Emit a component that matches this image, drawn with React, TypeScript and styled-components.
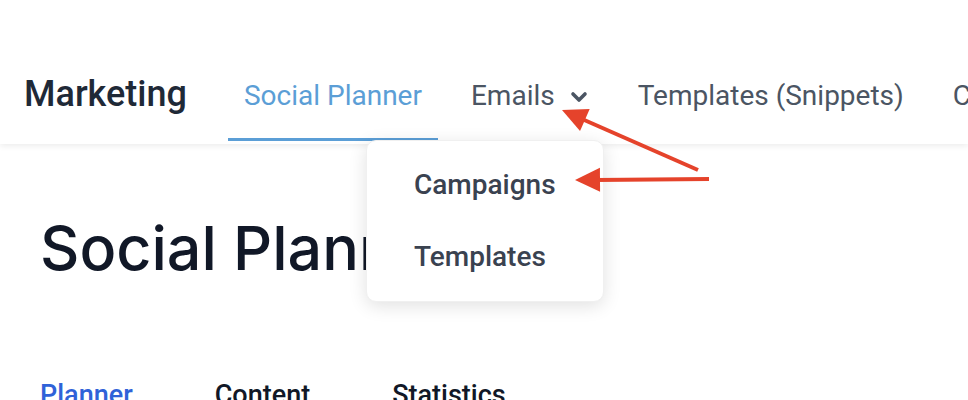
import styled, { createGlobalStyle } from 'styled-components';

const GlobalStyle = createGlobalStyle`
    html, body {
        margin: 0;
        padding: 0;
        background: #ffffff;
        overflow: hidden;
    }
    * {
        box-sizing: border-box;
    }
`

export const Page = styled.div`
    position: relative;
    width: 968px;
    height: 400px;
    overflow: hidden;
    font-family: Roboto, "Liberation Sans", sans-serif;
`

export const Header = styled.header`
    position: relative;
    z-index: 1;
    display: flex;
    align-items: flex-end;
    height: 144px;
    padding-left: 24px;
    background: #ffffff;
    box-shadow: 0 2px 6px rgba(0, 0, 0, 0.08);
    white-space: nowrap;
`

export const Brand = styled.span`
    padding-bottom: 32px;
    margin-right: 41px;
    font-size: 36px;
    line-height: 36px;
    font-weight: 500;
    color: #1f2937;
`

export const Nav = styled.nav`
    display: flex;
    gap: 17px;
`

export const NavLink = styled.a<{ $active?: boolean }>`
    display: flex;
    align-items: center;
    gap: 14px;
    height: 87px;
    margin-bottom: 3px;
    padding: 0 16px;
    border-bottom: 3px solid ${p => (p.$active ? '#5b9ed6' : 'transparent')};
    font-size: 28px;
    line-height: 28px;
    font-weight: 400;
    color: ${p => (p.$active ? '#5b9ed6' : '#4b5563')};
    text-decoration: none;
`

export const Chevron = styled.svg`
    width: 20px;
    height: 12px;
    margin-top: 2px;
`

export const Dropdown = styled.div`
    position: absolute;
    z-index: 2;
    left: 366px;
    top: 140px;
    width: 238px;
    padding: 8px 0;
    background: #ffffff;
    border: 1px solid #f0f0f0;
    border-radius: 10px;
    box-shadow: 0 4px 18px rgba(0, 0, 0, 0.12);
`

export const DropItem = styled.div`
    display: flex;
    align-items: center;
    height: 72px;
    padding-left: 47px;
    font-size: 28px;
    line-height: 28px;
    font-weight: 500;
    color: #3a4250;
`

export const Main = styled.main`
    padding: 68px 40px 0;
`

export const Title = styled.h1`
    margin: 0;
    font-family: Inter, "Liberation Sans", sans-serif;
    font-size: 61px;
    line-height: 72px;
    font-weight: 500;
    color: #111827;
    white-space: nowrap;
`

export const Tabs = styled.div`
    display: flex;
    gap: 82px;
    margin-top: 97px;
`

export const Tab = styled.span<{ $active?: boolean }>`
    font-size: 27px;
    line-height: 28px;
    font-weight: 500;
    color: ${p => (p.$active ? '#2f62d8' : '#111827')};
`

export const Arrows = styled.svg`
    position: absolute;
    z-index: 3;
    left: 0;
    top: 0;
    width: 968px;
    height: 400px;
    pointer-events: none;
`

const arrowHead = (tx: number, ty: number, fx: number, fy: number) => {
    const dx = tx - fx;
    const dy = ty - fy;
    const len = Math.hypot(dx, dy);
    const ux = dx / len;
    const uy = dy / len;
    const bx = tx - ux * 25;
    const by = ty - uy * 25;
    const px = -uy * 12;
    const py = ux * 12;
    return `${tx},${ty} ${bx + px},${by + py} ${bx - px},${by - py}`;
}

export default function App() {
    return (
        <Page>
            <GlobalStyle />
            <Header>
                <Brand>Marketing</Brand>
                <Nav>
                    <NavLink $active>Social Planner</NavLink>
                    <NavLink>
                        Emails
                        <Chevron viewBox="0 0 20 12">
                            <path d="M4 3 L10 9 L16 3" fill="none" stroke="#4b5563" strokeWidth="3.6" strokeLinecap="round" strokeLinejoin="round" />
                        </Chevron>
                    </NavLink>
                    <NavLink>Templates (Snippets)</NavLink>
                    <NavLink>Calendar</NavLink>
                </Nav>
            </Header>
            <Dropdown>
                <DropItem>Campaigns</DropItem>
                <DropItem>Templates</DropItem>
            </Dropdown>
            <Main>
                <Title>Social Planner</Title>
                <Tabs>
                    <Tab $active>Planner</Tab>
                    <Tab>Content</Tab>
                    <Tab>Statistics</Tab>
                </Tabs>
            </Main>
            <Arrows viewBox="0 0 968 400">
                <line x1="698" y1="170" x2="582" y2="119" stroke="#e5432b" strokeWidth="4" />
                <polygon points={arrowHead(562, 110, 698, 170)} fill="#e5432b" />
                <line x1="709" y1="179" x2="596" y2="180" stroke="#e5432b" strokeWidth="4" />
                <polygon points={arrowHead(575, 180, 709, 179)} fill="#e5432b" />
            </Arrows>
        </Page>
    );
}
